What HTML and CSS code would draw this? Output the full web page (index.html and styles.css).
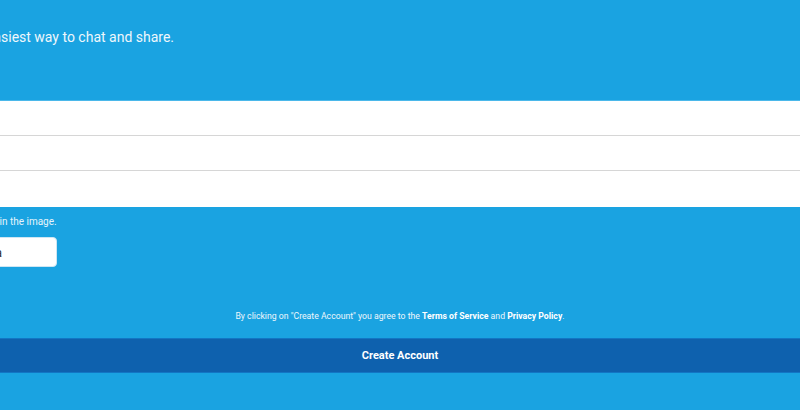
FILE: index.html
```html
<!DOCTYPE html>
<html>
<head>
  <meta charset='utf-8'>
  <title>Create Account</title>
<link rel="stylesheet" href="styles.css">
</head>
<body>
  <div class="signup">
    <div class="header">
      <p class="tagline">The easiest way to chat and share.</p>
    </div>
    <div class="fields">
      <input class="field" type="text">
      <input class="field" type="email">
      <input class="field" type="password">
    </div>
    <div class="captcha">
      <p class="captcha-label">Enter the characters you see in the image.</p>
      <div class="captcha-box"><span class="captcha-text">Captcha</span></div>
    </div>
    <p class="terms">By clicking on "Create Account" you agree to the <b>Terms of Service</b> and <b>Privacy Policy</b>.</p>
    <a class="button">Create Account</a>
  </div>
</body>
</html>
```

FILE: styles.css
```css
html, body {
  margin: 0;
  height: 100%;
  overflow: hidden;
}
body {
  background: #1aa3e1;
  font-family: Roboto, "Liberation Sans", sans-serif;
  color: #fff;
}
.signup {
  display: flex;
  flex-direction: column;
}
.header {
  height: 100px;
  border-bottom: 1px solid #4bb8ea;
}
.tagline {
  margin: 28px 0 0 -41px;
  font-size: 14px;
  line-height: 18px;
  color: #eef7fc;
  white-space: nowrap;
}
.fields {
  display: flex;
  flex-direction: column;
  background: #fff;
}
.field {
  height: 34px;
  border: 0;
  border-bottom: 1px solid #d6d6d6;
  padding: 0;
  background: #fff;
}
.field:last-child {
  height: 36px;
  border-bottom: 0;
}
.captcha {
  padding-top: 9px;
}
.captcha-label {
  margin: 0 0 0 -129px;
  font-size: 10px;
  line-height: 12px;
  white-space: nowrap;
  color: #e6f4fb;
}
.captcha-box {
  display: flex;
  align-items: center;
  justify-content: flex-end;
  width: 121px;
  height: 28px;
  margin: 9px 0 0 -120px;
  background: #fff;
  border: 1px solid #cfe6f3;
  border-radius: 4px;
  padding-right: 54px;
  box-sizing: content-box;
}
.captcha-text {
  font-size: 13px;
  color: #333;
}
.terms {
  margin: 43px 0 0;
  text-align: center;
  font-size: 8.7px;
  line-height: 12px;
  color: #eef7fc;
}
.terms b {
  color: #fff;
}
.button {
  display: block;
  margin-top: 16px;
  height: 33px;
  line-height: 33px;
  text-align: center;
  background: #0e61ae;
  border-top: 1px solid #1276c4;
  border-bottom: 1px solid #1276c4;
  font-size: 11px;
  font-weight: bold;
  color: #fff;
  cursor: pointer;
}
```
